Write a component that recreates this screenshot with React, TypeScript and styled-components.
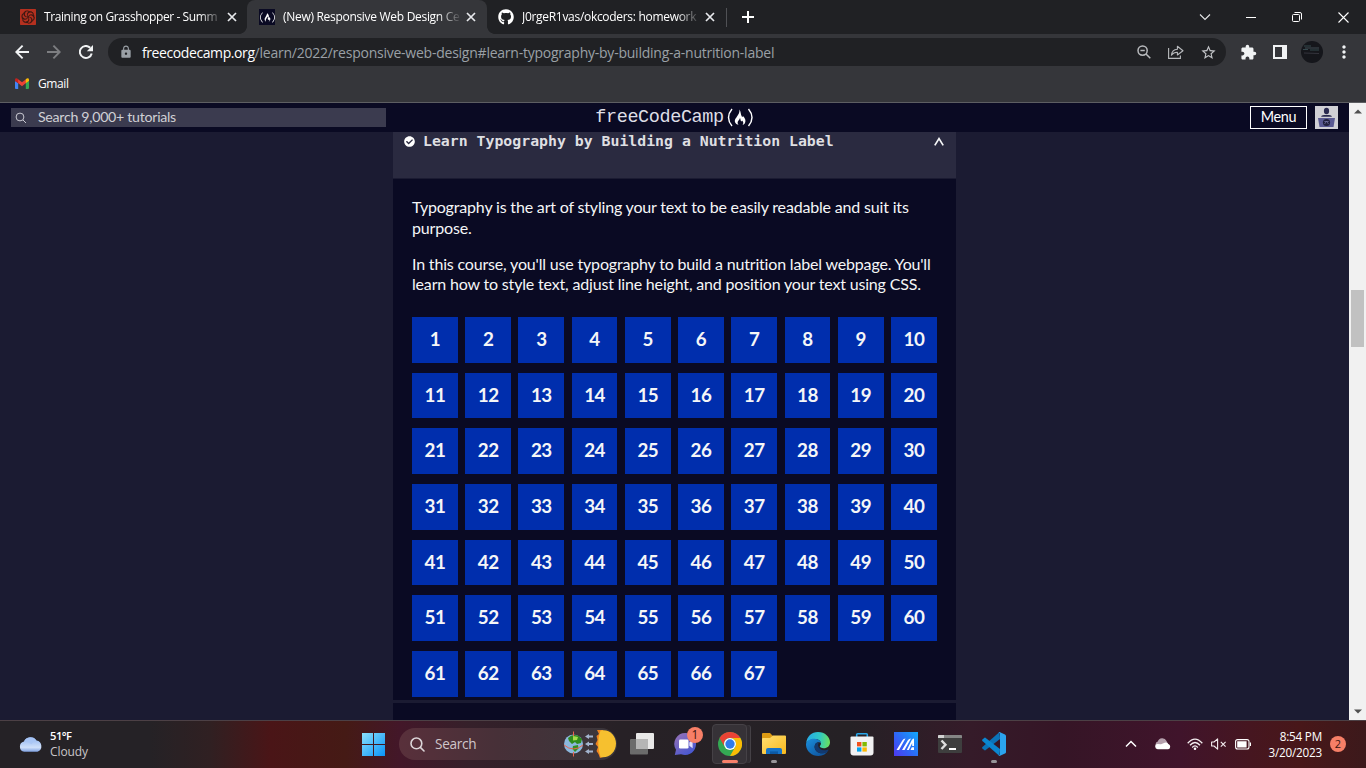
import React from "react";
import styled, { createGlobalStyle } from "styled-components";
import { MdExtension, MdLock, MdMoreVert, MdStarBorder } from "react-icons/md";
import { FaCheckCircle, FaFreeCodeCamp, FaGithub } from "react-icons/fa";
import { SiCodewars } from "react-icons/si";

const GlobalStyle = createGlobalStyle`
  * { box-sizing: border-box; }
  body { margin: 0; overflow: hidden; background: #1b1b32; }
  svg { display: block; flex: none; }
`;

const ui = `"Open Sans", "Noto Sans", sans-serif`;
const lato = `Lato, sans-serif`;

const Screen = styled.div`
  width: 1366px;
  height: 768px;
  display: flex;
  flex-direction: column;
  overflow: hidden;
  font-family: ${ui};
`;

const Label = styled.span<{ $size: number; $track?: number; $color?: string; $weight?: number; $lift?: number }>`
  font-size: ${(p) => p.$size}px;
  letter-spacing: ${(p) => p.$track ?? 0}px;
  color: ${(p) => p.$color ?? "#fff"};
  font-weight: ${(p) => p.$weight ?? 400};
  padding-bottom: ${(p) => p.$lift ?? 0}px;
  white-space: pre;
`;

/* ---------- Browser chrome ---------- */

const TabStrip = styled.div`
  height: 34px;
  flex: none;
  display: flex;
  align-items: center;
  background: #202124;
  padding-left: 8px;
`;

const TabBox = styled.div<{ $active?: boolean }>`
  position: relative;
  width: ${(p) => (p.$active ? 240 : 239)}px;
  height: 34px;
  padding: 0 9px 0 12px;
  display: flex;
  align-items: center;
  border-radius: 8px 8px 0 0;
  background: ${(p) => (p.$active ? "#35363a" : "transparent")};
  &:nth-child(3) {
    padding-left: 11px;
  }
  &::before,
  &::after {
    content: "";
    display: ${(p) => (p.$active ? "block" : "none")};
    position: absolute;
    bottom: 0;
    width: 8px;
    height: 8px;
  }
  &::before {
    left: -8px;
    background: radial-gradient(circle at 0 0, transparent 7.6px, #35363a 8.2px);
  }
  &::after {
    right: -8px;
    background: radial-gradient(circle at 100% 0, transparent 7.6px, #35363a 8.2px);
  }
`;

const Favicon = styled.div<{ $bg?: string; $fg: string }>`
  width: 16px;
  height: 16px;
  flex: none;
  margin-right: 8px;
  display: flex;
  align-items: center;
  justify-content: center;
  background: ${(p) => p.$bg ?? "transparent"};
  color: ${(p) => p.$fg};
`;

const TabTitle = styled.div`
  width: 177px;
  flex: none;
  overflow: hidden;
  line-height: 18px;
  margin-right: 6px;
  display: flex;
  mask-image: linear-gradient(90deg, #000 155px, transparent 179px);
`;

const Separator = styled.div`
  width: 1px;
  height: 19px;
  background: #505155;
`;

const NewTab = styled.div`
  width: 42px;
  display: flex;
  justify-content: center;
`;

const WindowButtons = styled.div`
  margin-left: auto;
  display: flex;
  height: 28px;
`;

const WindowButton = styled.div`
  width: 46px;
  display: flex;
  align-items: center;
  justify-content: center;
`;

const Toolbar = styled.div`
  height: 36px;
  flex: none;
  display: flex;
  align-items: center;
  padding: 0 6px;
  background: #35363a;
`;

const Slot = styled.div<{ $color?: string }>`
  width: 32px;
  display: flex;
  align-items: center;
  justify-content: center;
  color: ${(p) => p.$color ?? "#f1f3f4"};
`;

const Omnibox = styled.div`
  height: 28px;
  flex: 1;
  margin: 0 6px;
  padding: 0 2px 0 11px;
  border-radius: 14px;
  background: #202124;
  display: flex;
  align-items: center;
`;

const Url = styled.div`
  flex: 1;
  margin-left: 9px;
  line-height: 20px;
`;

const Avatar = styled.div`
  width: 22px;
  height: 22px;
  border-radius: 50%;
  overflow: hidden;
`;

const Bookmarks = styled.div`
  height: 33px;
  flex: none;
  display: flex;
  align-items: center;
  gap: 9px;
  padding: 0 15px 6px;
  background: #35363a;
  border-bottom: 1px solid #5d5e62;
`;

/* ---------- Page ---------- */

const Viewport = styled.div`
  height: 617px;
  flex: none;
  display: flex;
`;

const Page = styled.div`
  width: 1349px;
  display: flex;
  flex-direction: column;
  background: #1b1b32;
`;

const Nav = styled.div`
  height: 29px;
  flex: none;
  display: grid;
  grid-template-columns: 1fr auto 1fr;
  align-items: center;
  padding: 0 11px;
  background: #0a0a23;
`;

const SearchBox = styled.div`
  width: 375px;
  height: 19px;
  display: flex;
  align-items: center;
  gap: 11px;
  padding-left: 4px;
  background: #3b3b4f;
  font-family: ${lato};
`;

const Logo = styled.div`
  display: flex;
  align-items: center;
  gap: 2px;
  height: 27px;
  padding-bottom: 1px;
`;

const LogoText = styled.span`
  font-family: "Liberation Mono", monospace;
  font-size: 18.5px;
  letter-spacing: -0.4px;
  line-height: 24px;
  padding-top: 2px;
  color: #dedee6;
`;

const NavActions = styled.div`
  display: flex;
  justify-content: flex-end;
  align-items: center;
  gap: 8px;
`;

const MenuButton = styled.div`
  width: 57px;
  height: 23px;
  border: 1px solid #fff;
  display: flex;
  align-items: center;
  justify-content: center;
  font-family: ${lato};
`;

const Course = styled.div`
  width: 563px;
  flex: 1;
  margin-left: 393px;
  display: flex;
  flex-direction: column;
`;

const CourseHeader = styled.div`
  height: 47px;
  flex: none;
  display: flex;
  align-items: center;
  padding: 0 12px 28px 11px;
  background: #2a2a40;
  border-bottom: 1px solid #1b1b32;
`;

const CourseTitle = styled.div`
  flex: 1;
  margin-left: 8px;
  font-family: "DejaVu Sans Mono", monospace;
  font-weight: 700;
  font-size: 14.83px;
  line-height: 18px;
  color: #dfdfe2;
`;

const CourseBody = styled.div`
  height: 521px;
  flex: none;
  padding: 18px 19px 0;
  background: #0a0a23;
`;

const Paragraph = styled.p`
  margin: 0 0 15.6px;
  font-family: ${lato};
  font-size: 16px;
  letter-spacing: -0.175px;
  line-height: 20.6px;
  color: #f5f6f7;
  white-space: pre;
`;

const StepGrid = styled.div`
  display: grid;
  grid-template-columns: repeat(10, 45.84px);
  grid-auto-rows: 45.67px;
  gap: 10px 7.4px;
  margin-top: 22px;
`;

const Step = styled.div`
  display: flex;
  align-items: center;
  justify-content: center;
  background: #002ead;
  color: #f5f6f7;
  font-family: ${lato};
  font-weight: 700;
  font-size: 18.8px;
  letter-spacing: -0.5px;
  padding: 0 0 2.4px 0;
`;

const NextBlock = styled.div`
  flex: 1;
  margin-top: 3px;
  background: #0a0a23;
`;

const Scrollbar = styled.div`
  width: 17px;
  display: flex;
  flex-direction: column;
  align-items: center;
  justify-content: space-between;
  background: #f1f1f1;
`;

const Track = styled.div`
  flex: 1;
  padding-top: 170px;
`;

const Thumb = styled.div`
  width: 13px;
  height: 57px;
  background: #c1c1c1;
`;

const ArrowBox = styled.div`
  height: 17px;
  display: flex;
  align-items: center;
`;

/* ---------- Taskbar ---------- */

const Taskbar = styled.div`
  height: 48px;
  flex: none;
  display: flex;
  align-items: center;
  padding-bottom: 1px;
  border-top: 1px solid #4c4045;
  background: linear-gradient(
    90deg,
    #252226 0,
    #252226 150px,
    #302022 210px,
    #4a1517 270px,
    #451a15 345px,
    #431729 400px,
    #35202a 470px,
    #272126 620px,
    #252125 850px,
    #351b29 970px,
    #351526 1060px,
    #40142b 1180px,
    #461620 1250px,
    #481719 1300px,
    #3c191b 1366px
  );
`;

const Weather = styled.div`
  width: 351px;
  padding-left: 19px;
  display: flex;
  align-items: center;
  gap: 7px;
`;

const Stack = styled.div<{ $right?: boolean }>`
  display: flex;
  flex-direction: column;
  align-items: ${(p) => (p.$right ? "flex-end" : "flex-start")};
  line-height: 16px;
  padding-bottom: 1px;
`;

const TaskSlot = styled.div`
  position: relative;
  width: 44px;
  height: 40px;
  flex: none;
  display: flex;
  align-items: center;
  justify-content: center;
`;

const ActiveTile = styled.div`
  width: 35px;
  height: 40px;
  margin-right: 1px;
  display: flex;
  align-items: center;
  justify-content: center;
  border: 1px solid #454146;
  border-radius: 4px;
  background: #363237;
  box-shadow: 4px 0 0 -1px #302c31, 5px 0 0 -1px #454146;
`;

const Running = styled.div<{ $active?: boolean }>`
  position: absolute;
  bottom: ${(p) => (p.$active ? 1 : 1)}px;
  left: 50%;
  transform: translateX(-50%);
  width: ${(p) => (p.$active ? 16 : 6)}px;
  height: 3px;
  border-radius: 2px;
  background: ${(p) => (p.$active ? "#f8806a" : "#98969a")};
`;

const Badge = styled.div`
  position: absolute;
  left: 23px;
  top: 3px;
  width: 16px;
  height: 16px;
  border-radius: 50%;
  background: #f77f67;
  color: #3a1510;
  font-size: 12px;
  line-height: 16px;
  text-align: center;
`;

const SearchPill = styled.div`
  width: 218px;
  height: 32px;
  margin: 0 3px 0 4px;
  display: flex;
  align-items: center;
  padding-left: 11px;
  border-radius: 16px;
  background: linear-gradient(90deg, #59303b, #473038 45%, #3a363b);
  gap: 10px;
  overflow: hidden;
`;

const SearchArt = styled.div`
  margin-left: auto;
`;

const Tray = styled.div`
  margin-left: auto;
  display: flex;
  align-items: center;
  padding-right: 20px;
`;

const TrayItem = styled.div<{ $w: number; $end?: boolean }>`
  width: ${(p) => p.$w}px;
  display: flex;
  justify-content: ${(p) => (p.$end ? "flex-end" : "center")};
`;

const Notice = styled.div`
  width: 16px;
  height: 16px;
  margin-left: 8px;
  border-radius: 50%;
  background: #f77f67;
  color: #3a1510;
  font-size: 11px;
  line-height: 15px;
  text-align: center;
`;

const Close = () => (
  <svg width="10" height="10" viewBox="0 0 10 10" stroke="#e8eaed" strokeWidth="1.7">
    <path d="M1 1L9 9M9 1L1 9" />
  </svg>
);

interface TabProps {
  title: string;
  track: number;
  active?: boolean;
  bg?: string;
  fg: string;
  icon: React.ReactNode;
}

const Tab = ({ title, track, active, bg, fg, icon }: TabProps) => (
  <TabBox $active={active}>
    <Favicon $bg={bg} $fg={fg}>
      {icon}
    </Favicon>
    <TabTitle>
      <Label $size={12} $track={track}>
        {title}
      </Label>
    </TabTitle>
    <Close />
  </TabBox>
);

const Browser = () => (
  <>
    <TabStrip>
      <Tab title="Training on Grasshopper - Summ" track={-0.4} bg="#3d1812" fg="#b5301f" icon={<SiCodewars size={16} />} />
      <Tab title="(New) Responsive Web Design Ce" track={-0.3} active bg="#0a0a23" fg="#fff" icon={<FaFreeCodeCamp size={15} />} />
      <Tab title="J0rgeR1vas/okcoders: homework" track={-0.3} fg="#fff" icon={<FaGithub size={16} />} />
      <Separator />
      <NewTab>
        <svg width="12" height="12" viewBox="0 0 12 12" stroke="#fff" strokeWidth="2">
          <path d="M6 0V12M0 6H12" />
        </svg>
      </NewTab>
      <WindowButtons>
        <WindowButton>
          <svg width="12" height="8" viewBox="0 0 12 8" fill="none" stroke="#e6e7e9" strokeWidth="1.1">
            <path d="M1 1.5L6 6.5L11 1.5" />
          </svg>
        </WindowButton>
        <WindowButton>
          <svg width="10" height="10" viewBox="0 0 10 10" stroke="#fff">
            <path d="M0 5.5H10" />
          </svg>
        </WindowButton>
        <WindowButton>
          <svg width="10" height="10" viewBox="0 0 10 10" fill="none" stroke="#fff">
            <rect x="0.5" y="2.5" width="7" height="7" rx="1" />
            <path d="M2.5 0.5H8Q9.5 0.5 9.5 2V7.5" />
          </svg>
        </WindowButton>
        <WindowButton>
          <svg width="11" height="11" viewBox="0 0 11 11" stroke="#fff" strokeWidth="1.1">
            <path d="M0.5 0.5L10.5 10.5M10.5 0.5L0.5 10.5" />
          </svg>
        </WindowButton>
      </WindowButtons>
    </TabStrip>
    <Toolbar>
      <Slot>
        <svg width="14" height="14" viewBox="0 0 14 14" fill="none" stroke="currentColor" strokeWidth="1.9">
          <path d="M7.6 0.7L1.3 7L7.6 13.3M1.3 7H14" />
        </svg>
      </Slot>
      <Slot $color="#7d7e81">
        <svg width="14" height="14" viewBox="0 0 14 14" fill="none" stroke="currentColor" strokeWidth="1.9">
          <path d="M6.4 0.7L12.7 7L6.4 13.3M12.7 7H0" />
        </svg>
      </Slot>
      <Slot>
        <svg width="14" height="14" viewBox="0 0 14 14" fill="none" stroke="currentColor" strokeWidth="2">
          <path d="M12.7 8.4A6 6 0 1 1 11.2 2.8" />
          <path d="M14 0V6.2H7.8Z" fill="currentColor" stroke="none" />
        </svg>
      </Slot>
      <Omnibox>
        <MdLock size={14} color="#9aa0a6" />
        <Url>
          <Label $size={14} $track={-0.41}>freecodecamp.org</Label>
          <Label $size={14} $track={-0.24} $color="#9aa0a6">
            /learn/2022/responsive-web-design#learn-typography-by-building-a-nutrition-label
          </Label>
        </Url>
        <Slot>
          <svg width="14" height="14" viewBox="0 0 14 14" fill="none" stroke="#b8babd" strokeWidth="1.5">
            <circle cx="5.6" cy="5.6" r="4.6" />
            <path d="M9 9L13.3 13.3M3.4 5.6H7.8" />
          </svg>
        </Slot>
        <Slot>
          <svg width="16" height="14" viewBox="0 0 16 14" fill="none" stroke="#b8babd" strokeWidth="1.1">
            <path d="M0.6 3V13.4H12.4V10.5" />
            <path d="M3.4 10.2C3.8 6.4 6 4.4 9.4 4.2V1.2L15 5.7L9.4 10V7.2C6.8 7.1 5 8 3.4 10.2Z" strokeLinejoin="round" />
          </svg>
        </Slot>
        <Slot $color="#c3c5c8">
          <MdStarBorder size={17} />
        </Slot>
      </Omnibox>
      <Slot>
        <MdExtension size={17} />
      </Slot>
      <Slot>
        <svg width="14" height="14" viewBox="0 0 14 14">
          <path fill="#f1f3f4" fillRule="evenodd" d="M0 0H14V14H0ZM2 2V12H9V2Z" />
        </svg>
      </Slot>
      <Slot>
        <Avatar>
          <svg width="22" height="22" viewBox="0 0 22 22">
            <rect width="22" height="22" fill="#15161b" />
            <path d="M3 5H10M2 8.5H7M9 9H18" stroke="#35484d" strokeWidth="1" />
            <path d="M4 7H18" stroke="#55626a" strokeWidth="0.7" />
            <path d="M3 12L18 12.5" stroke="#34343c" />
          </svg>
        </Avatar>
      </Slot>
      <Slot>
        <MdMoreVert size={20} />
      </Slot>
    </Toolbar>
    <Bookmarks>
      <svg width="14" height="11" viewBox="0 0 14 11">
        <path fill="#4285f4" d="M0 3L3.2 5V11H1Q0 11 0 10Z" />
        <path fill="#34a853" d="M14 3L10.8 5V11H13Q14 11 14 10Z" />
        <path fill="#ea4335" d="M3 1.2L7 4.3L11 1.2V5L7 8.2L3 5Z" />
        <path fill="#c5221f" d="M0 1.8C0 0 1.8 -0.3 3.2 1.3V5.3L0 3Z" />
        <path fill="#fbbc04" d="M14 1.8C14 0 12.2 -0.3 10.8 1.3V5.3L14 3Z" />
      </svg>
      <Label $size={12} $track={-0.4}>Gmail</Label>
    </Bookmarks>
  </>
);

const steps = Array.from({ length: 67 }, (_, i) => i + 1);

const Site = () => (
  <Viewport>
    <Page>
      <Nav>
        <SearchBox>
          <svg width="12" height="12" viewBox="0 0 12 12" fill="none" stroke="#c9c9d2" strokeWidth="1">
            <circle cx="5" cy="5" r="3.9" />
            <path d="M7.9 7.9L11 11" />
          </svg>
          <Label $size={14.2} $track={-0.29} $color="#d0d0d5" $lift={2}>Search 9,000+ tutorials</Label>
        </SearchBox>
        <Logo>
          <LogoText>freeCodeCamp</LogoText>
          <svg width="28" height="19" viewBox="0 0 28 19" fill="none" stroke="#fff" strokeWidth="1.4">
            <path d="M6 1Q-1 9.5 6 18M22.5 1Q29.5 9.5 22.5 18" />
            <path
              stroke="none"
              fill="#fff"
              d="M13.5 1.5C15 4 14.5 6 15.8 8.6C16.3 9.5 17 9 16.8 7.8C19 10 20.2 12.5 19 15C18.4 16.2 17.5 16.7 16.6 16.8C18 14.8 17 13.2 16 12.4C16 13.5 15.2 13.7 14.8 12.8C14.4 11.8 14.6 11 14 10C13.8 12 11.2 13.2 11.6 15C11.7 15.9 12.2 16.4 12.6 16.8C10 16.4 8.2 14.3 9 11.8C9.8 9.4 13.8 6.5 13.5 1.5Z"
            />
          </svg>
        </Logo>
        <NavActions>
          <MenuButton>
            <Label $size={14.4} $track={-0.3} $lift={2}>Menu</Label>
          </MenuButton>
          <svg width="23" height="23" viewBox="0 0 23 23">
            <rect width="23" height="23" fill="#d0d0d5" />
            <ellipse cx="11.5" cy="5" rx="2.6" ry="3.2" fill="#2a2a50" />
            <path d="M6 10.8Q6.3 9.2 9 9H14Q16.7 9.2 17 10.8Z" fill="#2a2a50" />
            <path d="M3 12H20L18.5 21H4.5Z" fill="#5a5a93" />
            <circle cx="11.5" cy="16.5" r="3.6" fill="#22223e" />
            <path d="M9.5 18L11.5 15.2L13.5 18M9.3 15.5H13.7" stroke="#7a7aab" strokeWidth="0.7" fill="none" />
          </svg>
        </NavActions>
      </Nav>
      <Course>
        <CourseHeader>
          <FaCheckCircle size={11} color="#fff" />
          <CourseTitle>Learn Typography by Building a Nutrition Label</CourseTitle>
          <svg width="10" height="9" viewBox="0 0 10 9" fill="none" stroke="#f5f6f7" strokeWidth="1.7">
            <path d="M0.8 8.4L5 1.6L9.2 8.4" />
          </svg>
        </CourseHeader>
        <CourseBody>
          <Paragraph>{"Typography is the art of styling your text to be easily readable and suit its\npurpose."}</Paragraph>
          <Paragraph>{"In this course, you'll use typography to build a nutrition label webpage. You'll\nlearn how to style text, adjust line height, and position your text using CSS."}</Paragraph>
          <StepGrid>
            {steps.map((n) => (
              <Step key={n}>{n}</Step>
            ))}
          </StepGrid>
        </CourseBody>
        <NextBlock />
      </Course>
    </Page>
    <Scrollbar>
      <ArrowBox>
        <svg width="8" height="5" viewBox="0 0 8 5">
          <path fill="#505050" d="M0 4.5L4 0.5L8 4.5Z" />
        </svg>
      </ArrowBox>
      <Track>
        <Thumb />
      </Track>
      <ArrowBox>
        <svg width="8" height="5" viewBox="0 0 8 5">
          <path fill="#505050" d="M0 0.5L4 4.5L8 0.5Z" />
        </svg>
      </ArrowBox>
    </Scrollbar>
  </Viewport>
);

const WindowsLogo = () => (
  <svg width="23" height="23" viewBox="0 0 23 23">
    <defs>
      <linearGradient id="win" gradientUnits="userSpaceOnUse" x1="0" y1="0" x2="23" y2="23">
        <stop stopColor="#8be0fc" />
        <stop offset="1" stopColor="#0893f8" />
      </linearGradient>
    </defs>
    <path fill="url(#win)" d="M0 0H11V11H0ZM12 0H23V11H12ZM0 12H11V23H0ZM12 12H23V23H12Z" />
  </svg>
);

const ChromeLogo = () => (
  <svg width="24" height="24" viewBox="0 0 24 24">
    <circle cx="12" cy="12" r="12" fill="#34a853" />
    <path fill="#ea4335" d="M1.6 6A12 12 0 0 1 22.4 6H12A6 6 0 0 0 6.8 15Z" />
    <path fill="#fbbc04" d="M22.4 6A12 12 0 0 1 12 24L17.2 15A6 6 0 0 0 12 6Z" />
    <circle cx="12" cy="12" r="6" fill="#fff" />
    <circle cx="12" cy="12" r="4.7" fill="#2f7bea" />
  </svg>
);

const ExplorerLogo = () => (
  <svg width="24" height="22" viewBox="0 0 24 22">
    <defs>
      <linearGradient id="fold" x1="0" y1="0" x2="1" y2="1">
        <stop stopColor="#ffdf73" />
        <stop offset="1" stopColor="#f8b91c" />
      </linearGradient>
    </defs>
    <path fill="#dc9b13" d="M0 1Q0 0 1 0H8L11 3H23V7H0Z" />
    <path fill="url(#fold)" d="M0 6Q0 5 1 5H8L11 2.5H23Q24 2.5 24 3.5V20Q24 21 23 21H1Q0 21 0 20Z" />
    <path fill="#1673c7" d="M4 21V17Q4 15 6 15H18Q20 15 20 17V21Z" />
    <path fill="#0c59a4" d="M8 18.4H16V21H8Z" />
  </svg>
);

const EdgeLogo = () => (
  <svg width="24" height="24" viewBox="0 0 24 24">
    <defs>
      <linearGradient id="edgeTop" x1="0" y1="0.4" x2="1" y2="0.5">
        <stop stopColor="#26a9e8" />
        <stop offset="0.55" stopColor="#2fc8c4" />
        <stop offset="1" stopColor="#6be05c" />
      </linearGradient>
      <linearGradient id="edgeLow" x1="0" y1="0" x2="1" y2="1">
        <stop stopColor="#1b8fdd" />
        <stop offset="1" stopColor="#0c4a93" />
      </linearGradient>
    </defs>
    <path fill="url(#edgeTop)" d="M0.2 11C0.8 4.5 5.6 0 12 0C19 0 24 5 24 10.2C24 14 21.2 16.2 17.8 16.2C15.2 16.2 13.8 15.4 13.8 14.6C13.8 13.8 15 13.3 15 11.6C15 9 12.4 7 9 7C5 7 1.5 8.7 0.2 11Z" />
    <path fill="url(#edgeLow)" d="M0 12C0.5 9 4 6.5 8.6 6.8C12.3 7 15 9 15 11.6C13.8 9.6 9 9.7 8.6 14.4C8.4 18.3 12 21.5 16.5 21.3C19.3 21.2 21.3 20 22.4 18.3C20.6 21.8 16.8 24 12.6 24C5.4 24 -0.3 18.8 0 12Z" />
    <path fill="#12396f" d="M8.6 14.4C9 11 11.5 10.2 13 10.7C10.8 13.2 12.6 17.8 18 18.2C20.1 18.3 21.4 17.6 22.3 17.4C22.8 17.5 22.5 18.2 22.2 18.5C20.8 20.5 18.5 21.4 16.2 21.3C12 21.2 8.3 18.3 8.6 14.4Z" />
  </svg>
);

const Bar = () => (
  <Taskbar>
    <Weather>
      <svg width="24" height="17" viewBox="0 0 24 17">
        <defs>
          <linearGradient id="cloud" x1="0" y1="0" x2="0" y2="1">
            <stop stopColor="#8fb4f0" />
            <stop offset="0.7" stopColor="#cfe0fa" />
            <stop offset="1" stopColor="#7d9fe0" />
          </linearGradient>
        </defs>
        <path fill="url(#cloud)" d="M5.2 15.8A5.2 5.2 0 0 1 5 5.6A7 7 0 0 1 17.5 4.6A5.8 5.8 0 0 1 18.5 15.8Z" />
        <path fill="#a9c6f5" opacity="0.8" d="M5 5.6A7 7 0 0 1 17.5 4.6Q14 5.3 12.5 8.2Q9 5.1 5 5.6Z" />
      </svg>
      <Stack>
        <Label $size={11.2} $track={-0.5} $weight={600}>51°F</Label>
        <Label $size={12} $track={-0.1} $color="#c9c5c9">Cloudy</Label>
      </Stack>
    </Weather>
    <TaskSlot>
      <WindowsLogo />
    </TaskSlot>
    <SearchPill>
      <svg width="15" height="15" viewBox="0 0 15 15" fill="none" stroke="#dcd5d8" strokeWidth="1.6" strokeLinecap="round">
        <circle cx="6.4" cy="6.4" r="5.4" />
        <path d="M10.6 10.6L14 14" />
      </svg>
      <Label $size={13.6} $track={-0.3} $color="#cfc6ca" $lift={1}>Search</Label>
      <SearchArt>
        <svg width="54" height="30" viewBox="0 0 54 30">
          <circle cx="10.5" cy="15" r="9.5" fill="#8bb8dd" />
          <path fill="#2f8b1d" d="M5 9Q9 4.5 15 6.5L19 10L18 14L14 15L12 13L9 15L6 12Z" />
          <path fill="#348f25" d="M10 17L15 16L15.5 19.5L12 23L9.5 20Z" />
          <path fill="#a4dc4b" d="M10 7L15 8L14 11L10 11.5Z" />
          <path d="M1 16Q10.5 24 20 16M10.5 2.5V7M10.5 23V27.5" stroke="#e8634d" fill="none" strokeWidth="1" />
          <path fill="#a3b4ce" d="M22 7.5L26 5V6.5H30V8.5H26V10ZM22 15L26 12.5V14H30V16H26V17.5ZM22 22.5L26 20V21.5H30V23.5H26V25Z" />
          <path fill="#ee8320" d="M34 1H40V28L37 29L35.5 25L33.5 22L35 18L32.5 15L34.5 11L33.5 7L36 5Z" />
          <path fill="#f6c02f" d="M37.5 1.6C46 -0.5 53 6.5 53 14.5C53 23 46 29.5 37.5 28C34.5 19 34.5 10 37.5 1.6Z" />
        </svg>
      </SearchArt>
    </SearchPill>
    <TaskSlot>
      <svg width="24" height="22" viewBox="0 0 24 22">
        <path fill="#e8e8e8" d="M7 0H23Q24 0 24 1V15Q24 16 23 16H6V1Q6 0 7 0Z" />
        <path fill="#6b6b6b" d="M1 6H18V20.5Q18 21.5 17 21.5H1Q0 21.5 0 20.5V7Q0 6 1 6Z" />
        <path fill="#b5b5b5" d="M6 6H18V16H6Z" />
      </svg>
    </TaskSlot>
    <TaskSlot>
      <svg width="24" height="24" viewBox="0 0 24 24">
        <defs>
          <linearGradient id="chat" x1="0" y1="0" x2="0.7" y2="1">
            <stop stopColor="#9a72b4" />
            <stop offset="1" stopColor="#4657d1" />
          </linearGradient>
        </defs>
        <path fill="url(#chat)" d="M12 1A11 11 0 1 1 7 22.2L0.8 23L2 17.8A11 11 0 0 1 12 1Z" />
        <rect x="5" y="7.5" width="9.5" height="9" rx="1.3" fill="#fff" />
        <path fill="#e4e0fa" d="M15.3 10.5L18.6 8V16.2L15.3 13.7Z" />
      </svg>
      <Badge>1</Badge>
    </TaskSlot>
    <TaskSlot>
      <ActiveTile>
        <ChromeLogo />
      </ActiveTile>
      <Running $active />
    </TaskSlot>
    <TaskSlot>
      <ExplorerLogo />
      <Running />
    </TaskSlot>
    <TaskSlot>
      <EdgeLogo />
    </TaskSlot>
    <TaskSlot>
      <svg width="24" height="24" viewBox="0 0 24 24">
        <path d="M6.7 6V2.6Q6.7 1.7 7.6 1.7H16.4Q17.3 1.7 17.3 2.6V6" fill="none" stroke="#27a7ea" strokeWidth="1.6" />
        <path fill="#f1f1f2" d="M1.5 4.5H22.5Q23.5 4.5 23.5 5.5V20.5Q23.5 23.5 20.5 23.5H3.5Q0.5 23.5 0.5 20.5V5.5Q0.5 4.5 1.5 4.5Z" />
        <path fill="#f1511b" d="M7 10H11.4V14.4H7Z" />
        <path fill="#80bb01" d="M12.4 10H16.8V14.4H12.4Z" />
        <path fill="#00a4ef" d="M7 15.4H11.4V19.6H7Z" />
        <path fill="#fbb902" d="M12.4 15.4H16.8V19.6H12.4Z" />
      </svg>
    </TaskSlot>
    <TaskSlot>
      <svg width="24" height="24" viewBox="0 0 24 24">
        <defs>
          <linearGradient id="asus" x1="0" y1="0.9" x2="1" y2="0.1">
            <stop stopColor="#4b3df2" />
            <stop offset="0.5" stopColor="#2b6cf6" />
            <stop offset="1" stopColor="#14a4fb" />
          </linearGradient>
        </defs>
        <rect width="24" height="24" fill="url(#asus)" />
        <path fill="#fff" d="M2.5 18L8.3 8.5Q9.3 6.5 11.5 6.5L5 18ZM8 18L14 8Q15 6.5 17 6.5L10.5 18ZM12.8 18L17.8 8Q18.6 6.5 20 6.5V14H18.2V11L14.8 18ZM16.5 18L17.8 15.3H20V18Z" />
      </svg>
    </TaskSlot>
    <TaskSlot>
      <svg width="24" height="18" viewBox="0 0 24 18">
        <rect width="24" height="18" rx="1" fill="#3e3e3e" />
        <path fill="#858585" d="M1 0H23Q24 0 24 1V3H0V1Q0 0 1 0Z" />
        <path fill="#d2d2d2" d="M0 3V1Q0 0 1 0H6V3Z" />
        <path d="M3.5 5.5L7.5 9.8L3.5 14" stroke="#ddd" strokeWidth="2.4" fill="none" />
        <path d="M11 14H18" stroke="#fff" strokeWidth="2" />
      </svg>
    </TaskSlot>
    <TaskSlot>
      <svg width="24" height="24" viewBox="0 0 24 24">
        <path fill="#0b73b8" d="M17.5 0L18 7L3.4 18.2Q2.8 18.6 2.2 18.1L0.4 16.5Q-0.2 15.8 0.4 15.1Z" />
        <path fill="#0b86d0" d="M17.5 24L18 17L3.4 5.8Q2.8 5.4 2.2 5.9L0.4 7.5Q-0.2 8.2 0.4 8.9Z" />
        <path fill="#2ba4ee" d="M17.5 0L23 2.5Q24 3 24 4V20Q24 21 23 21.5L17.5 24Q16.8 24.1 16.4 23.5Q18 24 18 22V2Q18 0 16.4 0.5Q16.8 -0.1 17.5 0Z" />
      </svg>
      <Running />
    </TaskSlot>
    <Tray>
      <TrayItem $w={32}>
        <svg width="12" height="8" viewBox="0 0 12 8" fill="none" stroke="#fff" strokeWidth="1.5">
          <path d="M1 6.5L6 1.5L11 6.5" />
        </svg>
      </TrayItem>
      <TrayItem $w={32}>
        <svg width="16" height="12" viewBox="0 0 16 12">
          <path fill="#b5a0ad" d="M3.5 10A3.3 3.3 0 0 1 2.8 3.6A4.6 4.6 0 0 1 11.5 3L13.6 7Z" />
          <path fill="#fff" d="M3 11.2A2.6 2.6 0 0 1 2.6 6L6 6.2L8.5 5.2Q11.5 3.5 13.3 6A2.7 2.7 0 0 1 13.2 11.2Z" />
        </svg>
      </TrayItem>
      <TrayItem $w={32}>
        <svg width="16" height="13" viewBox="0 0 16 13" fill="none" stroke="#f4eef0" strokeWidth="1.3">
          <path d="M0.7 5.2Q8 -3 15.3 5.2M3 7.3Q8 1.7 13 7.3M5.2 9.5Q8 6.4 10.8 9.5" />
          <circle cx="8" cy="10.8" r="1.3" fill="#fff" stroke="none" />
        </svg>
      </TrayItem>
      <TrayItem $w={16}>
        <svg width="16" height="12" viewBox="0 0 16 12" fill="none" stroke="#f4eef0" strokeWidth="1.1">
          <path d="M0.6 4H3L6.6 0.8V11.2L3 8H0.6Z" strokeLinejoin="round" />
          <path d="M9.8 3.8L14.6 8.6M14.6 3.8L9.8 8.6" />
        </svg>
      </TrayItem>
      <TrayItem $w={33}>
        <svg width="17" height="11" viewBox="0 0 17 11">
          <rect x="0.6" y="0.6" width="13.4" height="9.4" rx="2" fill="none" stroke="#fff" strokeWidth="1.1" />
          <path fill="#fff" d="M2.2 2.2H11.6V8.4H2.2ZM14.8 3.5H16V7H14.8Z" />
        </svg>
      </TrayItem>
      <TrayItem $w={62} $end>
        <Stack $right>
          <Label $size={11.7} $track={-0.2}>8:54 PM</Label>
          <Label $size={11.7} $track={-0.2}>3/20/2023</Label>
        </Stack>
      </TrayItem>
      <Notice>2</Notice>
    </Tray>
  </Taskbar>
);

export default function App() {
  return (
    <Screen>
      <GlobalStyle />
      <Browser />
      <Site />
      <Bar />
    </Screen>
  );
}
